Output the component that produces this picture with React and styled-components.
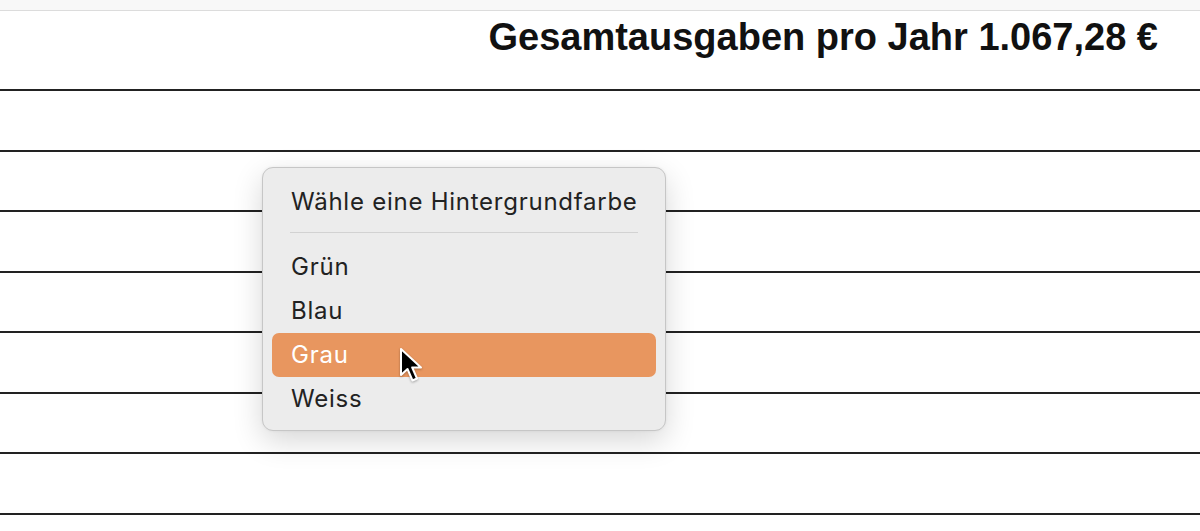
import React from 'react';
import styled, { createGlobalStyle } from 'styled-components';

const ROW_COUNT = 8;
const COLORS = ['Grün', 'Blau', 'Grau', 'Weiss'];

const GlobalStyle = createGlobalStyle`
  html, body {
    margin: 0;
    padding: 0;
    background: #ffffff;
    overflow: hidden;
  }
  * {
    box-sizing: border-box;
  }
`;

const Page = styled.div`
  position: relative;
  width: 1200px;
  height: 531px;
  overflow: hidden;
  background: #ffffff;
`;

const TopStrip = styled.div`
  height: 11px;
  background: #f8f8f8;
  border-bottom: 1px solid #dcdcdc;
`;

const Header = styled.div`
  height: 78px;
  display: flex;
  justify-content: flex-end;
  align-items: flex-start;
  padding: 7px 42px 0 0;
`;

const Total = styled.h1`
  margin: 0;
  font-family: "Liberation Sans", Arial, sans-serif;
  font-weight: 700;
  font-size: 38px;
  line-height: 38px;
  color: #111111;
`;

const Rows = styled.div`
  display: flex;
  flex-direction: column;
`;

const Row = styled.div`
  height: 60.57px;
  flex: 0 0 auto;
  border-top: 2px solid #222222;
`;

const Menu = styled.div`
  position: absolute;
  left: 262px;
  top: 167px;
  width: 404px;
  height: 264px;
  padding: 12px 9px 10px;
  background: #ececec;
  border: 1px solid #c6c6c6;
  border-radius: 11px;
  box-shadow: 0 10px 30px rgba(0, 0, 0, 0.16), 0 0 3px rgba(0, 0, 0, 0.06);
  font-family: Inter, "Noto Sans", sans-serif;
  font-size: 24px;
  letter-spacing: 0.75px;
  color: #222222;
`;

const MenuTitle = styled.div`
  height: 44px;
  line-height: 44px;
  padding-left: 19px;
`;

const Separator = styled.div`
  height: 1px;
  margin: 8px 18px 12px;
  background: #d2d2d2;
`;

const MenuItem = styled.div`
  height: 44px;
  line-height: 44px;
  padding-left: 19px;
  border-radius: 7px;
  background: ${p => (p.$active ? '#e8965f' : 'transparent')};
  color: ${p => (p.$active ? '#ffffff' : '#222222')};
`;

const Pointer = styled.svg`
  position: absolute;
  left: 399px;
  top: 347px;
  width: 26px;
  height: 38px;
  filter: drop-shadow(0 1px 1px rgba(0, 0, 0, 0.3));
`;

function Cursor() {
  return (
    <Pointer viewBox="0 0 26 38">
      <path
        d="M2 2 L2 28 L8.5 22 L13.5 33.5 L18 31.5 L13.2 20.5 L22 20.5 Z"
        fill="#000000"
        stroke="#ffffff"
        strokeWidth="2"
        strokeLinejoin="round"
      />
    </Pointer>
  );
}

export default function App() {
  return (
    <Page>
      <GlobalStyle />
      <TopStrip />
      <Header>
        <Total>Gesamtausgaben pro Jahr 1.067,28 €</Total>
      </Header>
      <Rows>
        {Array.from({ length: ROW_COUNT }).map((_, i) => (
          <Row key={i} />
        ))}
      </Rows>
      <Menu>
        <MenuTitle>Wähle eine Hintergrundfarbe</MenuTitle>
        <Separator />
        {COLORS.map(c => (
          <MenuItem key={c} $active={c === 'Grau'}>
            {c}
          </MenuItem>
        ))}
      </Menu>
      <Cursor />
    </Page>
  );
}
